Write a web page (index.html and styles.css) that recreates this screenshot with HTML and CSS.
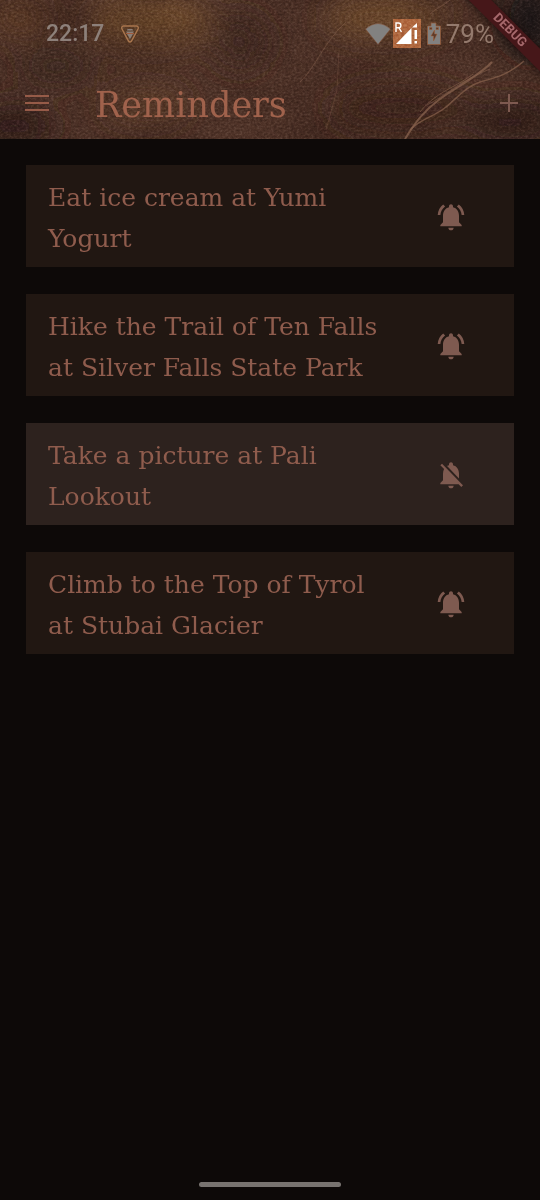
FILE: index.html
```html
<!DOCTYPE html>
<html lang="en">
<head>
<meta charset="utf-8">
<meta name="viewport" content="width=device-width, initial-scale=1">
<title>Reminders</title>
<link rel="stylesheet" href="styles.css">
</head>
<body>
<svg class="sprite" aria-hidden="true">
  <symbol id="bell-active" viewBox="0 0 24 24"><path d="M7.58 4.08L6.15 2.65C3.75 4.48 2.17 7.3 2.03 10.5h2c.15-2.65 1.51-4.97 3.55-6.42zm12.39 6.42h2c-.15-3.2-1.73-6.02-4.12-7.85l-1.42 1.43c2.02 1.45 3.39 3.77 3.54 6.42zM18 11c0-3.07-1.64-5.64-4.5-6.32V4c0-.83-.67-1.5-1.5-1.5s-1.500.67-1.500 1.500v.68C7.630 5.360 6 7.920 6 11v5l-2 2v1h16v-1l-2-2v-5zm-6 11c1.100 0 2-.900 2-2h-4c0 1.100.9 2 2 2z"/></symbol>
  <symbol id="bell-off" viewBox="0 0 24 24"><path d="M20 18.690L7.840 6.140 5.270 3.490 4 4.760l2.800 2.800v.01c-.52.990-.8 2.160-.8 3.420v5l-2 2v1h13.730l2 2L21 19.720l-1-1.030zM12 22c1.110 0 2-.890 2-2h-4c0 1.110.89 2 2 2zm6-7.320V11c0-3.080-1.640-5.640-4.500-6.320V4c0-.83-.67-1.500-1.500-1.500s-1.500.67-1.500 1.500v.68c-.15.030-.29.080-.42.120-.1.030-.2.070-.3.110h-.01c-.01 0-.01 0-.02.010-.23.090-.46.200-.68.310 0 0-.01 0-.01.010L18 14.680z"/></symbol>
</svg>
<div class="screen">
  <header class="top">
    <svg class="leather" viewBox="0 0 540 139" preserveAspectRatio="none" aria-hidden="true">
      <defs>
        <filter id="blotch" x="0" y="0" width="100%" height="100%" color-interpolation-filters="sRGB">
          <feTurbulence type="fractalNoise" baseFrequency="0.012 0.018" numOctaves="3" seed="8"/>
          <feColorMatrix values="0 0 0 0 0.12  0 0 0 0 0.05  0 0 0 0 0.04  1.6 0 0 0 -0.6"/>
        </filter>
        <filter id="grain" x="0" y="0" width="100%" height="100%" color-interpolation-filters="sRGB">
          <feTurbulence type="fractalNoise" baseFrequency="0.35 0.5" numOctaves="2" seed="4"/>
          <feColorMatrix values="1.3 0 0 0 -0.15  1.3 0 0 0 -0.15  1.3 0 0 0 -0.15  0 0 0 0 1"/>
        </filter>
        <filter id="soft" x="-50%" y="-50%" width="200%" height="200%"><feGaussianBlur stdDeviation="14"/></filter>
        <filter id="crease-soft"><feGaussianBlur stdDeviation="0.6"/></filter>
      </defs>
      <rect width="540" height="139" fill="#4f3328"/>
      <g filter="url(#soft)">
        <ellipse cx="150" cy="22" rx="60" ry="22" fill="#74502d"/>
        <ellipse cx="20" cy="18" rx="26" ry="14" fill="#6b4529"/>
        <ellipse cx="385" cy="18" rx="60" ry="18" fill="#6d482a"/>
        <ellipse cx="145" cy="105" rx="40" ry="14" fill="#60402a"/>
        <ellipse cx="240" cy="42" rx="26" ry="26" fill="#422b22"/>
        <ellipse cx="56" cy="66" rx="34" ry="14" fill="#3d2a20"/>
        <ellipse cx="14" cy="126" rx="40" ry="22" fill="#35201b"/>
        <ellipse cx="400" cy="108" rx="70" ry="24" fill="#3f271f"/>
        <ellipse cx="530" cy="20" rx="30" ry="40" fill="#1f1512"/>
        <ellipse cx="510" cy="122" rx="50" ry="20" fill="#35201d"/>
      </g>
      <rect width="540" height="139" filter="url(#blotch)" opacity=".35"/>
      <rect class="grain" width="540" height="139" filter="url(#grain)"/>
      <g fill="none" stroke="#8a644f" filter="url(#crease-soft)">
        <path d="M405 139C416 121 425 110 440 99S480 75 492 62" stroke-width="2" opacity=".75"/>
        <path d="M410 130C420 119 434 117 446 107S467 86 480 82 505 77 524 61" stroke-width="1.500" opacity=".7"/>
        <path d="M420 112C437 91 455 88 473 74" opacity=".6"/>
        <path d="M427 105C445 96 458 82 490 69" opacity=".5"/>
        <path d="M300 82C316 67 323 43 346 22" opacity=".45"/>
        <path d="M339 50L337 90 326 130" opacity=".3"/>
        <path d="M430 14C436 8 445 5 450 0" opacity=".5"/>
      </g>
    </svg>
    <div class="status">
      <span class="clock">22:17</span>
      <svg class="shield" viewBox="0 0 20 18" aria-hidden="true">
        <path d="M3.500 1h13q2.500.5 1.500 3l-6.500 12q-1.500 2-3 0L2 4Q1 1.500 3.500 1z" fill="none" stroke="#a9764e" stroke-width="1.500"/>
        <path d="M7.500 4h5l.5 1.500H7zM6 6.500h8L13 8H7zM7 9h6l-3 5z" fill="#8a7f78"/>
        <path d="M6 8.500h8" stroke="#a05b3d"/>
      </svg>
      <svg class="wifi" viewBox="0 0 26 22" aria-hidden="true"><path d="M.5 6Q13-5 25.500 6L13 21.500z" fill="#828180" stroke="#875338" stroke-width=".5"/></svg>
      <svg class="signal" viewBox="0 0 28 29" aria-hidden="true">
        <rect width="28" height="29" fill="#b0683f"/>
        <rect width="28" height="29" filter="url(#grain)" class="grain"/>
        <path d="M3 13V4h2.500a2.300 2.300 0 010 4.800H3m3 0L8.500 13" fill="none" stroke="#fff" stroke-width="1.400"/>
        <path d="M3 25L18.500 9v16zM19 8.500L24 4v4.500zM21.500 11H24v9h-2.500zM21.500 22H24v2.500h-2.500z" fill="#fff"/>
      </svg>
      <svg class="battery" viewBox="0 0 14 23" aria-hidden="true">
        <path d="M4 1h5v3h4.500v18.500H.5V4H4z" fill="#828180" stroke="#985a37" stroke-width=".7"/>
        <path d="M2.500 5.500h2.500v2H2.500zM9 5.500h2.500v2H9zM7.500 8L4 14h2.500v5l3.500-7H7.500z" fill="#5b3a2a" stroke="#a35f35" stroke-width=".5"/>
      </svg>
      <span class="percent">79%</span>
    </div>
    <div class="bar">
      <button class="icon-button menu" type="button" aria-label="Open menu"><svg viewBox="0 0 24 16"><path d="M0 1h24M0 8h24M0 15h24" stroke="currentColor" stroke-width="2"/></svg></button>
      <h1 class="title">Reminders</h1>
      <button class="icon-button add" type="button" aria-label="Add reminder"><svg viewBox="0 0 18 18"><path d="M0 9h18M9 0v18" stroke="currentColor" stroke-width="2"/></svg></button>
    </div>
    <div class="ribbon">DEBUG</div>
  </header>
  <main>
    <ul class="list">
      <li class="card"><span class="label">Eat ice cream at Yumi Yogurt</span><button class="icon-button bell" type="button" aria-label="Turn off reminder"><svg viewBox="0 0 24 24"><use href="#bell-active"/></svg></button></li>
      <li class="card"><span class="label">Hike the Trail of Ten Falls at Silver Falls State Park</span><button class="icon-button bell" type="button" aria-label="Turn off reminder"><svg viewBox="0 0 24 24"><use href="#bell-active"/></svg></button></li>
      <li class="card muted"><span class="label">Take a picture at Pali Lookout</span><button class="icon-button bell" type="button" aria-label="Turn on reminder"><svg viewBox="0 0 24 24"><use href="#bell-off"/></svg></button></li>
      <li class="card"><span class="label">Climb to the Top of Tyrol at Stubai Glacier</span><button class="icon-button bell" type="button" aria-label="Turn off reminder"><svg viewBox="0 0 24 24"><use href="#bell-active"/></svg></button></li>
    </ul>
  </main>
  <footer class="home"><div class="handle"></div></footer>
</div>
</body>
</html>
```
FILE: styles.css
```css
* { box-sizing: border-box; }
body {
  margin: 0;
  background: #0d0908;
  color: #8f5c4d;
  font-family: "Roboto Slab", "DejaVu Serif", serif;
}
.sprite { position: absolute; width: 0; height: 0; }
.screen { min-height: 100vh; display: flex; flex-direction: column; }
.top { position: relative; overflow: hidden; padding-bottom: 6px; }
.leather { position: absolute; inset: 0; width: 100%; height: 100%; }
.grain { mix-blend-mode: soft-light; opacity: .35; }
.status {
  position: relative;
  display: flex;
  align-items: center;
  height: 67px;
  padding: 0 46px;
  color: #8d807a;
  font: 500 23px/30px Roboto, sans-serif;
}
.shield { width: 20px; height: 18px; margin-left: 16px; }
.wifi { width: 26px; height: 22px; margin-left: auto; }
.signal { width: 28px; height: 29px; margin-left: 2px; }
.battery { width: 14px; height: 23px; margin: 0 5px 0 6px; }
.percent { font-size: 26px; font-weight: 400; color: #947a6d; }
.bar { position: relative; display: flex; align-items: center; height: 66px; padding: 6px 22px 0 25px; }
.icon-button { display: flex; padding: 0; border: 0; background: none; color: #7e5a50; cursor: pointer; }
.icon-button svg { fill: currentColor; }
.menu { color: #965b48; }
.menu svg { width: 24px; height: 16px; }
.title { flex: 1; margin: 0 0 0 46px; padding-top: 3px; color: #a0624c; font-size: 35px; font-weight: 400; line-height: 48px; }
.add svg { width: 18px; height: 18px; }
.ribbon {
  position: absolute;
  top: 22px;
  right: -50px;
  width: 160px;
  height: 16px;
  transform: rotate(45deg);
  background: #461719;
  box-shadow: 0 0 8px #1a0f0d;
  color: #a5686b;
  font: 700 13px/16px Roboto, sans-serif;
  text-align: center;
}
main { flex: 1; padding: 26px; }
.list { display: grid; gap: 27px; margin: 0; padding: 0; list-style: none; }
.card { display: flex; align-items: center; justify-content: space-between; gap: 40px; padding: 12px 47px 8px 22px; background: #211712; }
.muted { background: #2d221e; }
.label { flex: 1; font-size: 25px; line-height: 41px; }
.bell { margin-bottom: 2px; }
.bell svg { width: 32px; height: 32px; }
.home { display: flex; justify-content: center; padding: 13px; }
.handle { width: 142px; height: 5px; border-radius: 3px; background: #787370; }
```
